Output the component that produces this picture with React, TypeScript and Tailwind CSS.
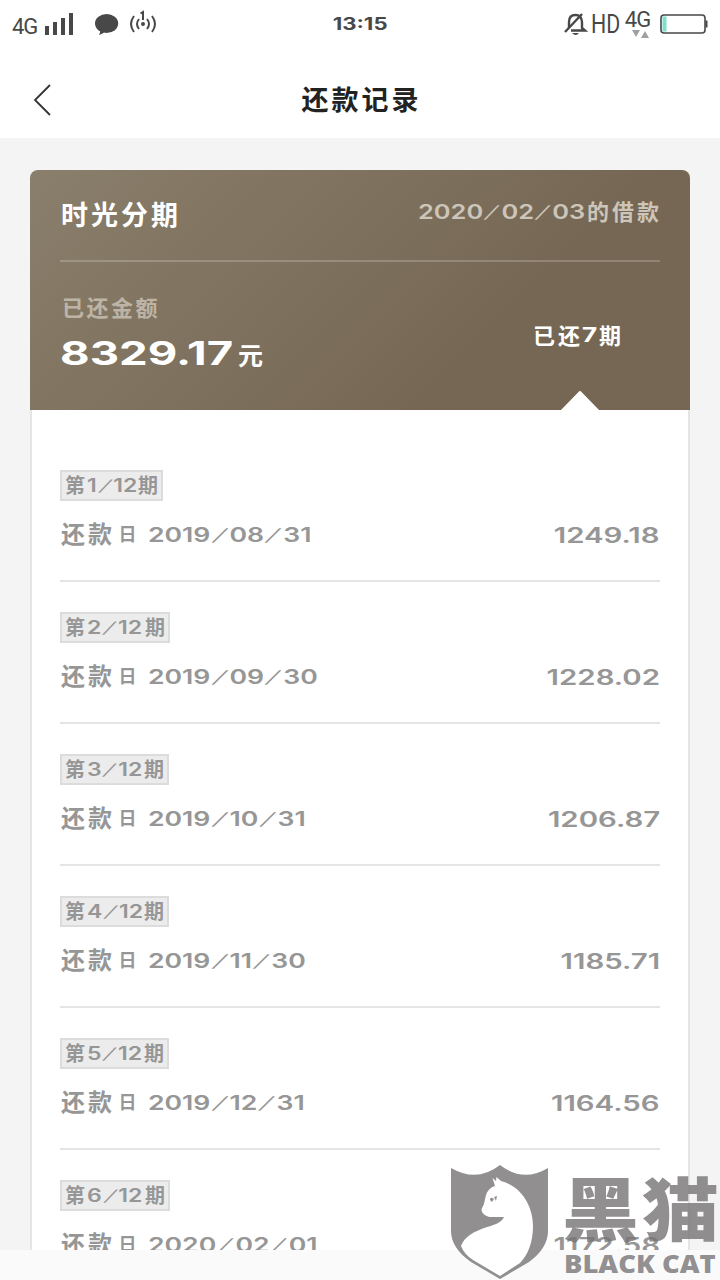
import type { ReactNode } from 'react';
import clsx from 'clsx';

const records = [
  { no: '1', date: '2019/08/31', amount: '1249.18', tagW: 'w-[103px]', numW: 'w-[50px]' },
  { no: '2', date: '2019/09/30', amount: '1228.02', tagW: 'w-[110px]', numW: 'w-[57px]' },
  { no: '3', date: '2019/10/31', amount: '1206.87', tagW: 'w-[109px]', numW: 'w-[56px]' },
  { no: '4', date: '2019/11/30', amount: '1185.71', tagW: 'w-[109px]', numW: 'w-[56px]' },
  { no: '5', date: '2019/12/31', amount: '1164.56', tagW: 'w-[109px]', numW: 'w-[56px]' },
  { no: '6', date: '2020/02/01', amount: '1172.58', tagW: 'w-[110px]', numW: 'w-[57px]' },
];

// Wide digits, slashes get slanted further than the font has them
function Num({ text, className, inner }: { text: string; className?: string; inner: string }) {
  const parts = text.split('/');
  return (
    <span className={clsx('flex font-[Inter,sans-serif] whitespace-nowrap', className)}>
      <span className={clsx('block', inner)}>
        {parts.map((part, i) => (
          <span key={i}>
            {i > 0 && <span className="inline-block scale-y-[0.84] -skew-x-[20deg] px-[0.18em] font-normal">/</span>}
            {part}
          </span>
        ))}
      </span>
    </span>
  );
}

function StatusBar() {
  return (
    <div className="flex h-12 items-center justify-between pr-3 pl-3 text-[#484848]">
      <div className="flex w-[200px] items-center">
        <span className="w-[33px] pt-[6px] font-[Roboto,sans-serif] text-[22px] leading-none tracking-[-1px]">4G</span>
        <svg width="28" height="24" viewBox="0 0 28 24" fill="currentColor">
          <rect x="0" y="14" width="4" height="9" />
          <rect x="8" y="10" width="4" height="13" />
          <rect x="16" y="6" width="4" height="17" />
          <rect x="24" y="1" width="4" height="22" />
        </svg>
        <svg className="ml-[22px]" width="24" height="24" viewBox="0 0 24 24" fill="currentColor">
          <ellipse cx="11.6" cy="11.5" rx="11.6" ry="9.4" />
          <path d="M4 17C6 19 5 21 4 23C8 22 9 20 11 19Z" />
        </svg>
        <svg className="mb-[2px] ml-[10px]" width="28" height="26" viewBox="0 0 28 26" fill="none" stroke="currentColor" strokeWidth="2">
          <path d="M5 6Q-1 14 5 22M10 9Q6 14 10 19M18 9Q22 14 18 19M23 6Q29 14 23 22" />
          <path d="M11.500 3.500L14 2V10" />
          <circle cx="14" cy="14" r="2" fill="currentColor" stroke="none" />
        </svg>
      </div>
      <Num text="13:15" className="w-[100px] justify-center pt-px" inner="scale-x-[1.3] text-[17px] leading-none font-bold" />
      <div className="flex w-[200px] items-center justify-end">
        <svg width="24" height="24" viewBox="0 0 24 24" fill="none" stroke="currentColor" strokeWidth="2.400">
          <path d="M5 16V10Q5 3 11.500 3Q17.500 3 18 10V16L21 18.500H7" />
          <path d="M1 20L18 2" />
          <path d="M8 21H15Q12 25 8 21Z" fill="currentColor" stroke="none" />
        </svg>
        <span className="ml-[4px] w-[33px] font-[Roboto,sans-serif] text-[26px] leading-none font-normal">
          <span className="-ml-px block origin-left scale-x-[0.82]">HD</span>
        </span>
        <div className="flex w-[27px] flex-col items-center pb-px font-[Roboto,sans-serif] text-[22px] leading-[20px] tracking-[-1px]">
          <span className="-ml-[2px]">4G</span>
          <svg className="ml-[4px]" width="18" height="8" viewBox="0 0 18 8" fill="#a0a0a0">
            <path d="M0 0H8L4 7ZM9 8H17L13 1Z" />
          </svg>
        </div>
        <svg className="ml-[8px] shrink-0" width="48" height="20" viewBox="0 0 48 20" fill="none">
          <rect x="1" y="1" width="44" height="18" rx="3" stroke="#484848" strokeWidth="1.600" />
          <rect x="2.500" y="2.500" width="4" height="15" fill="#7fe0cd" />
          <rect x="45.500" y="6.500" width="2" height="7" fill="#484848" />
        </svg>
      </div>
    </div>
  );
}

function Summary() {
  return (
    <section className="relative h-[240px] rounded-t-lg bg-[linear-gradient(135deg,#8a7f6c_0%,#756753_70%)] px-[30px] text-white">
      <div className="flex h-[92px] items-center justify-between border-b-2 border-white/20">
        <h2 className="pb-[1px] pl-px text-[27px] font-bold tracking-[3px]">时光分期</h2>
        <div className="flex items-center pb-[7px] text-[#cdc5b9]">
          <Num text="2020/02/03" className="w-[169px]" inner="origin-left scale-x-[1.27] text-[20px] leading-[24px] font-semibold" />
          <span className="-mr-[2px] pb-[4px] text-[22px] leading-[24px] font-bold tracking-[3px]">的借款</span>
        </div>
      </div>
      <div className="flex justify-between">
        <div className="pt-[31px]">
          <p className="pl-[2px] text-[22px] leading-[26px] font-bold tracking-[2.500px] text-[#bdb4a6]">已还金额</p>
          <div className="flex items-center pt-[18px]">
            <Num text="8329.17" className="w-[178px]" inner="origin-left scale-x-[1.38] text-[33px] leading-[32px] font-bold" />
            <span className="pt-[1px] text-[25px] leading-[30px] font-bold">元</span>
          </div>
        </div>
        <div className="mt-[58px] mr-[38px] flex h-[28px] items-center text-[22px] font-bold tracking-[3px]">
          已还
          <Num text="7" className="-ml-px w-[17px] pt-px tracking-normal" inner="origin-left scale-x-[1.3] text-[20px]" />
          <span className="-mr-[2px]">期</span>
        </div>
      </div>
      <svg className="absolute right-[90px] bottom-0" width="40" height="20" viewBox="0 0 40 20" fill="#fff">
        <path d="M1 20L18.500 2Q20 0 21.500 2L39 20Z" />
      </svg>
    </section>
  );
}

function Tag({ className, children }: { className: string; children: ReactNode }) {
  return (
    <div className={clsx('flex h-[31px] items-center justify-between border-2 border-[#dcdcdc] bg-[#ececec] px-[3px] text-[20px] leading-none font-bold', className)}>
      {children}
    </div>
  );
}

function CatShield() {
  return (
    <svg width="98" height="116" viewBox="0 0 98 116">
      <path fill="#918f90" d="M0 4Q26 19 49 1Q72 19 97 4V67Q97 84 78 98L49 115L20 98Q0 84 0 67Z" />
      <path
        fill="#fff"
        d="M41.500 14L45 17L45.500 13L50 17C72 23 82 44 82 62C82 78 77 91 69 99L49 112L22 96Q13 90 10 82C14 72 22 68 36 63C44 61 51 58 53 53H39C35 52 29 49 31 44C36 37 32 26 44 22Z"
      />
      <path fill="#918f90" d="M39 36Q39 32 43 35L41 38Z M43 33L46 32L45 37Z" />
    </svg>
  );
}

export default function App() {
  return (
    <div className="relative flex h-screen flex-col overflow-hidden bg-[#f4f4f4] font-['Noto_Sans_CJK_SC',sans-serif]">
      <header className="h-[138px] shrink-0 bg-white">
        <StatusBar />
        <div className="flex h-[104px] items-center px-[33px] pb-px">
          <svg width="18" height="32" viewBox="0 0 18 32" fill="none" stroke="#333" strokeWidth="1.800">
            <path d="M17 1L2 16L17 31" />
          </svg>
          <h1 className="flex-1 pr-[15px] pb-[2px] text-center text-[27px] leading-none font-bold tracking-[3px] text-[#222]">还款记录</h1>
        </div>
      </header>

      <main className="min-h-0 flex-1 overflow-hidden px-[30px] pt-8">
        <Summary />
        <ul className="border-x-2 border-[#e5e5e5] bg-white px-[28px] pt-[30px] text-[#969696]">
          {records.map((item) => (
            <li key={item.no} className="h-[142px] border-b-2 border-[#e5e5e5] pt-[30px]">
              <Tag className={item.tagW}>
                <span className="pb-[2px]">第</span>
                <Num text={`${item.no}/12`} className={item.numW} inner="origin-left scale-x-[1.28] text-[18px] leading-none font-semibold" />
                <span className="pb-[2px]">期</span>
              </Tag>
              <div className="mt-[18px] flex h-[30px] items-center">
                <span className="w-[88px] pb-[3px] pl-px text-[24px] leading-none font-bold tracking-[3px]">
                  还款<span className="inline-block scale-75">日</span>
                </span>
                <Num text={item.date} className="pt-px" inner="origin-left scale-x-[1.33] text-[20px] leading-none font-semibold" />
                <Num text={item.amount} className="ml-auto pt-[2px]" inner="origin-right scale-x-[1.4] text-[21px] leading-none font-semibold" />
              </div>
            </li>
          ))}
        </ul>
      </main>

      <footer className="h-[30px] shrink-0 bg-[#fafafa]" />

      {/* watermark */}
      <div className="absolute right-0 bottom-0 flex h-[116px] w-[269px] text-[#757374]/80">
        <CatShield />
        <div className="ml-[15px] flex flex-col">
          <span className="-ml-[2px] h-[88px] origin-top-left scale-x-[1.04] scale-y-[0.93] text-[74px] leading-[90px] font-black tracking-[3px] whitespace-nowrap">黑猫</span>
          <span className="origin-left scale-x-[1.14] font-['Open_Sans',sans-serif] text-[24px] leading-[24px] font-extrabold whitespace-nowrap">BLACK CAT</span>
        </div>
      </div>
    </div>
  );
}
